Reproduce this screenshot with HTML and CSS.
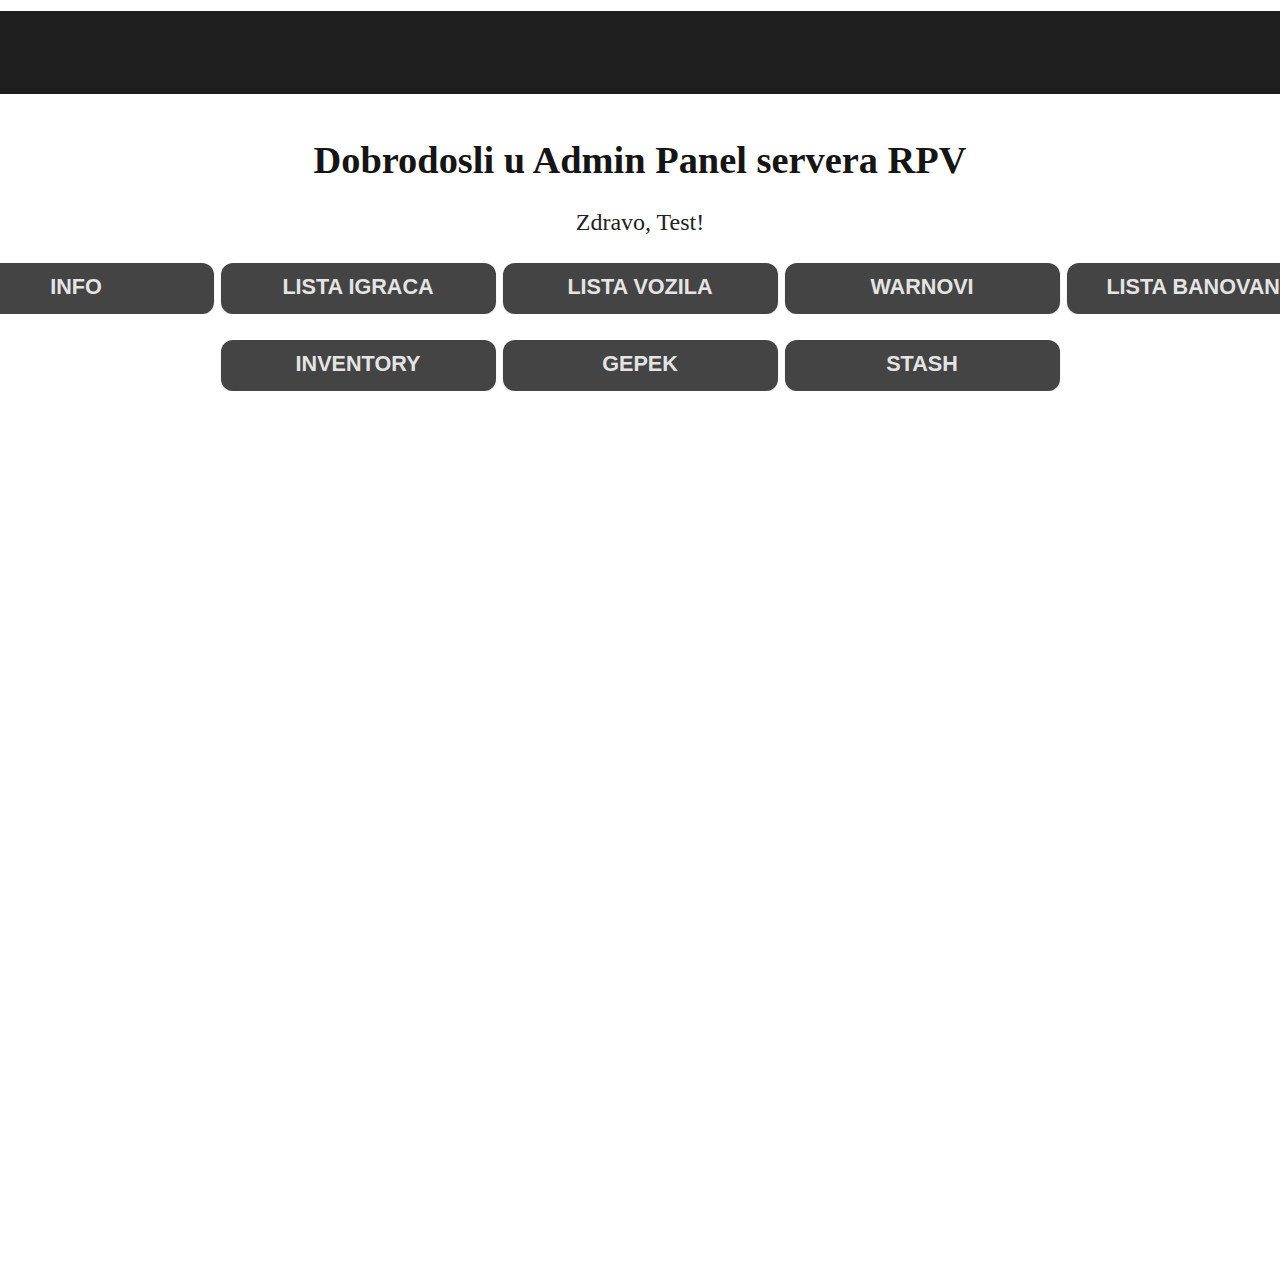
FILE: index.html
```html
<!DOCTYPE html>
<html lang="sr">
<head>
<meta charset="utf-8">
<title>Admin Panel RPV</title>
<link rel="stylesheet" href="styles.css">
</head>
<body>
<header class="topbar"></header>
<main class="content">
  <h1 class="title">Dobrodosli u Admin Panel servera RPV</h1>
  <p class="greeting">Zdravo, Test!</p>
  <nav class="menu">
    <div class="menu-row">
      <button class="btn">INFO</button>
      <button class="btn">LISTA IGRACA</button>
      <button class="btn">LISTA VOZILA</button>
      <button class="btn">WARNOVI</button>
      <button class="btn">LISTA BANOVANIH</button>
    </div>
    <div class="menu-row">
      <button class="btn">INVENTORY</button>
      <button class="btn">GEPEK</button>
      <button class="btn">STASH</button>
    </div>
  </nav>
</main>
</body>
</html>
```
FILE: styles.css
```css
html, body {
  margin: 0;
  padding: 0;
  background: #ffffff;
  overflow-x: hidden;
}
body {
  font-family: "Liberation Serif", "Times New Roman", serif;
  color: #111;
  padding-top: 11px;
}
.topbar {
  height: 83px;
  background: #1e1e1e;
}
.content {
  display: flex;
  flex-direction: column;
  align-items: center;
}
.title {
  margin: 44px 0 0;
  font-size: 38.4px;
  line-height: 44px;
  font-weight: bold;
  color: #151515;
}
.greeting {
  margin: 26px 0 0;
  font-size: 24px;
  line-height: 28px;
  color: #222;
}
.menu {
  width: 100%;
  margin-top: 27px;
  display: flex;
  flex-direction: column;
  gap: 26px;
}
.menu-row {
  display: flex;
  justify-content: center;
  gap: 7px;
  overflow: hidden;
}
.btn {
  flex: none;
  width: 275px;
  height: 51px;
  border: none;
  border-radius: 12px;
  background: #444444;
  color: #e4e4e4;
  font-family: "Liberation Sans", Arial, sans-serif;
  font-weight: bold;
  font-size: 21.6px;
  padding: 0 0 3px;
  box-shadow: 0 1px 2px rgba(0,0,0,0.15);
}
```
